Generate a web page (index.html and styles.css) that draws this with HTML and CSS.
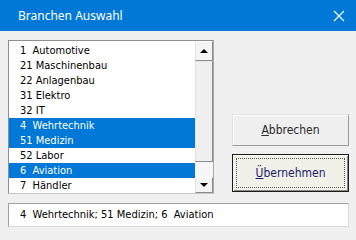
FILE: index.html
```html
<!DOCTYPE html>
<html lang="de">
<head>
<meta charset="utf-8">
<title>Branchen Auswahl</title>
<link rel="stylesheet" href="styles.css">
</head>
<body>
<div class="window">
  <div class="titlebar">
    <span class="title">Branchen Auswahl</span>
    <svg class="close" width="12" height="12" viewBox="0 0 12 12"><path d="M1 1 L11 11 M11 1 L1 11" stroke="#fff" stroke-width="1.1" fill="none"/></svg>
  </div>
  <div class="content">
    <div class="top">
      <div class="listbox">
        <ul class="items">
          <li>1  Automotive</li>
          <li>21 Maschinenbau</li>
          <li>22 Anlagenbau</li>
          <li>31 Elektro</li>
          <li>32 IT</li>
          <li class="sel">4  Wehrtechnik</li>
          <li class="sel">51 Medizin</li>
          <li>52 Labor</li>
          <li class="sel">6  Aviation</li>
          <li>7  Händler</li>
        </ul>
        <div class="scrollbar">
          <div class="sb-btn up"><span class="arrow-up"></span></div>
          <div class="thumb"></div>
          <div class="track"></div>
          <div class="sb-btn down"><span class="arrow-down"></span></div>
        </div>
      </div>
      <div class="buttons">
        <button class="btn cancel"><span class="u">A</span>bbrechen</button>
        <button class="btn default"><span class="focus"><span class="u">Ü</span>bernehmen</span></button>
      </div>
    </div>
    <div class="result">4  Wehrtechnik; 51 Medizin; 6  Aviation</div>
  </div>
</div>
</body>
</html>
```

FILE: styles.css
```css
html, body {
  margin: 0;
  padding: 0;
  background: #f0f0f0;
}
.window {
  width: 356px;
  height: 232px;
  background: #f0f0f0;
  overflow: hidden;
}
.titlebar {
  height: 31px;
  background: #0078d7;
  display: flex;
  align-items: center;
  justify-content: space-between;
  padding: 0 11px 0 18px;
  box-sizing: border-box;
}
.title {
  color: #fff;
  font-family: "Noto Sans", "Open Sans", sans-serif;
  font-size: 12px;
  line-height: 14px;
}
.close {
  display: block;
}
.content {
  padding: 9px 7px 0 8px;
}
.top {
  display: flex;
  align-items: flex-start;
}
.listbox {
  width: 206px;
  height: 154px;
  box-sizing: border-box;
  border: 1px solid #8f8f8f;
  border-right-color: #a9a9a9;
  border-bottom-color: #c8c8c8;
  background: #fff;
  display: flex;
}
.items {
  list-style: none;
  margin: 0;
  padding: 2px 0 0 0;
  width: 186px;
  font-family: "DejaVu Sans Condensed", "DejaVu Sans", sans-serif;
  font-size: 11px;
}
.items li {
  height: 15px;
  line-height: 15px;
  padding-left: 11px;
  white-space: pre;
  color: #000;
}
.items li.sel {
  background: #0078d7;
  color: #fff;
}
.scrollbar {
  width: 18px;
  height: 152px;
  display: flex;
  flex-direction: column;
  background: #f0f0f0;
}
.sb-btn {
  box-sizing: border-box;
  display: flex;
  align-items: center;
  justify-content: center;
  background: #f4f4f4;
  border: 1px solid;
  border-color: #ffffff #8a8a8a #8a8a8a #e3e3e3;
}
.sb-btn.up {
  height: 20px;
}
.sb-btn.down {
  height: 16px;
}
.thumb {
  height: 101px;
  box-sizing: border-box;
  background: #f0f0f0;
  border: 1px solid;
  border-color: #e3e3e3 #8a8a8a #8a8a8a #e3e3e3;
}
.track {
  height: 15px;
  background: #f6f6f6;
}
.arrow-up {
  width: 0;
  height: 0;
  border-left: 4px solid transparent;
  border-right: 4px solid transparent;
  border-bottom: 4px solid #000;
}
.arrow-down {
  width: 0;
  height: 0;
  border-left: 4px solid transparent;
  border-right: 4px solid transparent;
  border-top: 4px solid #000;
}
.buttons {
  margin-left: 18px;
  width: 117px;
  display: flex;
  flex-direction: column;
  gap: 8px;
  padding-top: 74px;
}
.btn {
  margin: 0;
  padding: 0;
  width: 117px;
  box-sizing: border-box;
  font-family: "DejaVu Sans Condensed", "DejaVu Sans", sans-serif;
  font-size: 12px;
  display: flex;
  align-items: center;
  justify-content: center;
}
.btn.cancel {
  height: 32px;
  background: #efefef;
  color: #2a2a2a;
  border: 1px solid;
  border-color: #e2e2e2 #9c9c9c #9c9c9c #e2e2e2;
  box-shadow: inset 1px 1px 0 #fff;
}
.btn.default {
  height: 38px;
  background: #f1f1ea;
  color: #1c1c6a;
  border: 1px solid #1a1a1a;
  box-shadow: inset 1px 1px 0 #fff, inset -1px -1px 0 #8a8a8a;
  padding: 3px;
}
.focus {
  flex: 1;
  align-self: stretch;
  display: flex;
  align-items: center;
  justify-content: center;
  border: 1px dotted #555;
}
.u {
  text-decoration: underline;
}
.result {
  margin-top: 9px;
  height: 24px;
  box-sizing: border-box;
  border: 1px solid #a0a0a0;
  border-right-color: #d8d8d8;
  border-bottom-color: #d8d8d8;
  background: #fff;
  font-family: "DejaVu Sans Condensed", "DejaVu Sans", sans-serif;
  font-size: 11px;
  line-height: 22px;
  padding-left: 11px;
  white-space: pre;
  color: #000;
}
```
